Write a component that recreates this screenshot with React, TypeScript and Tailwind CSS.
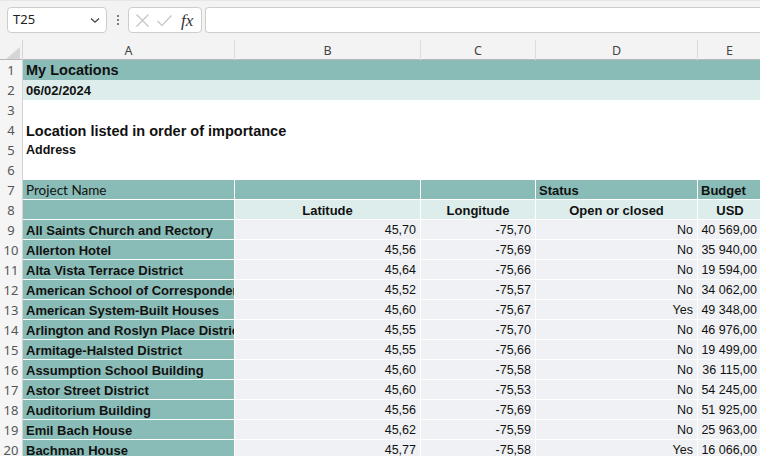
import React from "react";

const GRID = "grid grid-cols-[23px_212px_186px_115px_162px_64px]";
const CELL_FONT = "font-['Liberation_Sans',Arial,sans-serif]";
const UI_FONT = "font-['Noto_Sans','Open_Sans',sans-serif]";

type Row = [string, string, string, string, string];

const rows: Row[] = [
  ["All Saints Church and Rectory", "45,70", "-75,70", "No", "40 569,00"],
  ["Allerton Hotel", "45,56", "-75,69", "No", "35 940,00"],
  ["Alta Vista Terrace District", "45,64", "-75,66", "No", "19 594,00"],
  ["American School of Correspondence", "45,52", "-75,57", "No", "34 062,00"],
  ["American System-Built Houses", "45,60", "-75,67", "Yes", "49 348,00"],
  ["Arlington and Roslyn Place District", "45,55", "-75,70", "No", "46 976,00"],
  ["Armitage-Halsted District", "45,55", "-75,66", "No", "19 499,00"],
  ["Assumption School Building", "45,60", "-75,58", "No", "36 115,00"],
  ["Astor Street District", "45,60", "-75,53", "No", "54 245,00"],
  ["Auditorium Building", "45,56", "-75,69", "No", "51 925,00"],
  ["Emil Bach House", "45,62", "-75,59", "No", "25 963,00"],
  ["Bachman House", "45,77", "-75,58", "Yes", "16 066,00"],
];

function RowNum({ n }: { n: number }) {
  return (
    <div className={`h-5 bg-[#f5f5f5] border-r border-[#d4d4d4] text-center text-[13px] leading-[21px] text-[#555] ${UI_FONT}`}>
      {n}
    </div>
  );
}

function Toolbar() {
  return (
    <div className="h-10 bg-[#f3f3f3] border-t border-[#e6e6e6] flex items-start pt-[6px] pl-[7px]">
      <div className="w-[100px] h-[26px] bg-white border border-[#cdcdcd] rounded-[4px] flex items-center justify-between pl-[5px] pr-[5px]">
        <span className={`text-[13px] text-[#222] ${UI_FONT}`}>T25</span>
        <svg width="12" height="12" viewBox="0 0 12 12" fill="none" stroke="#444" strokeWidth="1.3">
          <path d="M2 4.5 L6 8.2 L10 4.5" />
        </svg>
      </div>
      <div className="w-[21px] h-[26px] flex flex-col items-center justify-center gap-[2px]">
        <span className="w-[2px] h-[2px] bg-[#555] rounded-full" />
        <span className="w-[2px] h-[2px] bg-[#555] rounded-full" />
        <span className="w-[2px] h-[2px] bg-[#555] rounded-full" />
      </div>
      <div className="w-[74px] h-[26px] bg-white border border-[#cdcdcd] rounded-[4px] flex items-center pl-[5px] gap-[5px]">
        <svg width="17" height="17" viewBox="0 0 17 17" fill="none" stroke="#c4c4c4" strokeWidth="1.2">
          <path d="M2.5 2.5 L14.5 14.5 M14.5 2.5 L2.5 14.5" />
        </svg>
        <svg width="17" height="17" viewBox="0 0 17 17" fill="none" stroke="#c4c4c4" strokeWidth="1.2">
          <path d="M1.5 9 L6 13.5 L15.5 3.5" />
        </svg>
        <span className="text-[17px] italic text-[#333] font-['Liberation_Serif',serif] ml-[3px] leading-none">fx</span>
      </div>
      <div className="flex-1 ml-[3px] h-[26px] bg-white border border-r-0 border-[#cdcdcd] rounded-l-[4px]" />
    </div>
  );
}

function ColHeader() {
  const letters = ["A", "B", "C", "D", "E"];
  return (
    <div className={`${GRID} h-5 bg-[#f3f3f3] border-b border-[#b9b9b9]`}>
      <div className="relative border-r border-[#d4d4d4]">
        <svg className="absolute right-[2px] bottom-[2px]" width="14" height="12" viewBox="0 0 14 12">
          <polygon points="14,0 14,12 0,12" fill="#d6d6d6" />
        </svg>
      </div>
      {letters.map((l) => (
        <div key={l} className={`flex items-center justify-center pt-[2px] border-r border-[#dcdcdc] text-[12.5px] text-[#444] ${UI_FONT}`}>
          {l}
        </div>
      ))}
    </div>
  );
}

export default function App() {
  return (
    <div className="w-[760px] h-[456px] overflow-hidden bg-white">
      <Toolbar />
      <div className="w-[762px]">
        <ColHeader />
        <div className={`${GRID} text-[#111] ${CELL_FONT}`}>
          {/* rows 1-6 */}
          <RowNum n={1} />
          <div className="col-span-5 h-5 bg-[#8abcb7] pl-[3px] text-[14.5px] font-bold leading-[21px]">My Locations</div>
          <RowNum n={2} />
          <div className="col-span-5 h-5 bg-[#ddedeb] pl-[3px] text-[13px] font-bold leading-[21px]">06/02/2024</div>
          <RowNum n={3} />
          <div className="col-span-5 h-5" />
          <RowNum n={4} />
          <div className="col-span-5 h-5 pl-[3px] text-[14.5px] font-bold leading-[22px]">Location listed in order of importance</div>
          <RowNum n={5} />
          <div className="col-span-5 h-5 pl-[3px] text-[12.5px] font-bold leading-[21px]">Address</div>
          <RowNum n={6} />
          <div className="col-span-5 h-5" />

          {/* row 7 */}
          <RowNum n={7} />
          <div className={`h-5 bg-[#8abcb7] border-r border-b border-white pl-[3px] text-[13.5px] leading-[21px] font-['Lato',sans-serif]`}>Project Name</div>
          <div className="h-5 bg-[#8abcb7] border-r border-b border-white" />
          <div className="h-5 bg-[#8abcb7] border-r border-b border-white" />
          <div className="h-5 bg-[#8abcb7] border-r border-b border-white pl-[3px] text-[13px] font-bold leading-[21px]">Status</div>
          <div className="h-5 bg-[#8abcb7] border-b border-white pl-[3px] text-[13px] font-bold leading-[21px]">Budget</div>

          {/* row 8 */}
          <RowNum n={8} />
          <div className="h-5 bg-[#8abcb7] border-r border-b border-white" />
          {["Latitude", "Longitude", "Open or closed", "USD"].map((t, i) => (
            <div
              key={t}
              className={`h-5 bg-[#ddedeb] border-b border-white text-center text-[13px] font-bold leading-[21px] ${i < 3 ? "border-r" : ""}`}
            >
              {t}
            </div>
          ))}

          {rows.map((r, i) => (
            <React.Fragment key={r[0]}>
              <RowNum n={i + 9} />
              <div className="h-5 bg-[#8abcb7] border-r border-b border-white pl-[3px] text-[13px] font-bold leading-[21px] whitespace-nowrap overflow-hidden">
                {r[0]}
              </div>
              {r.slice(1).map((v, j) => (
                <div
                  key={j}
                  className={`h-5 bg-[#f0f1f5] border-b border-white text-right text-[12.5px] leading-[21px] whitespace-nowrap overflow-hidden ${j < 3 ? "border-r pr-[4px]" : "pr-[5px]"}`}
                >
                  {v}
                </div>
              ))}
            </React.Fragment>
          ))}
        </div>
      </div>
    </div>
  );
}
